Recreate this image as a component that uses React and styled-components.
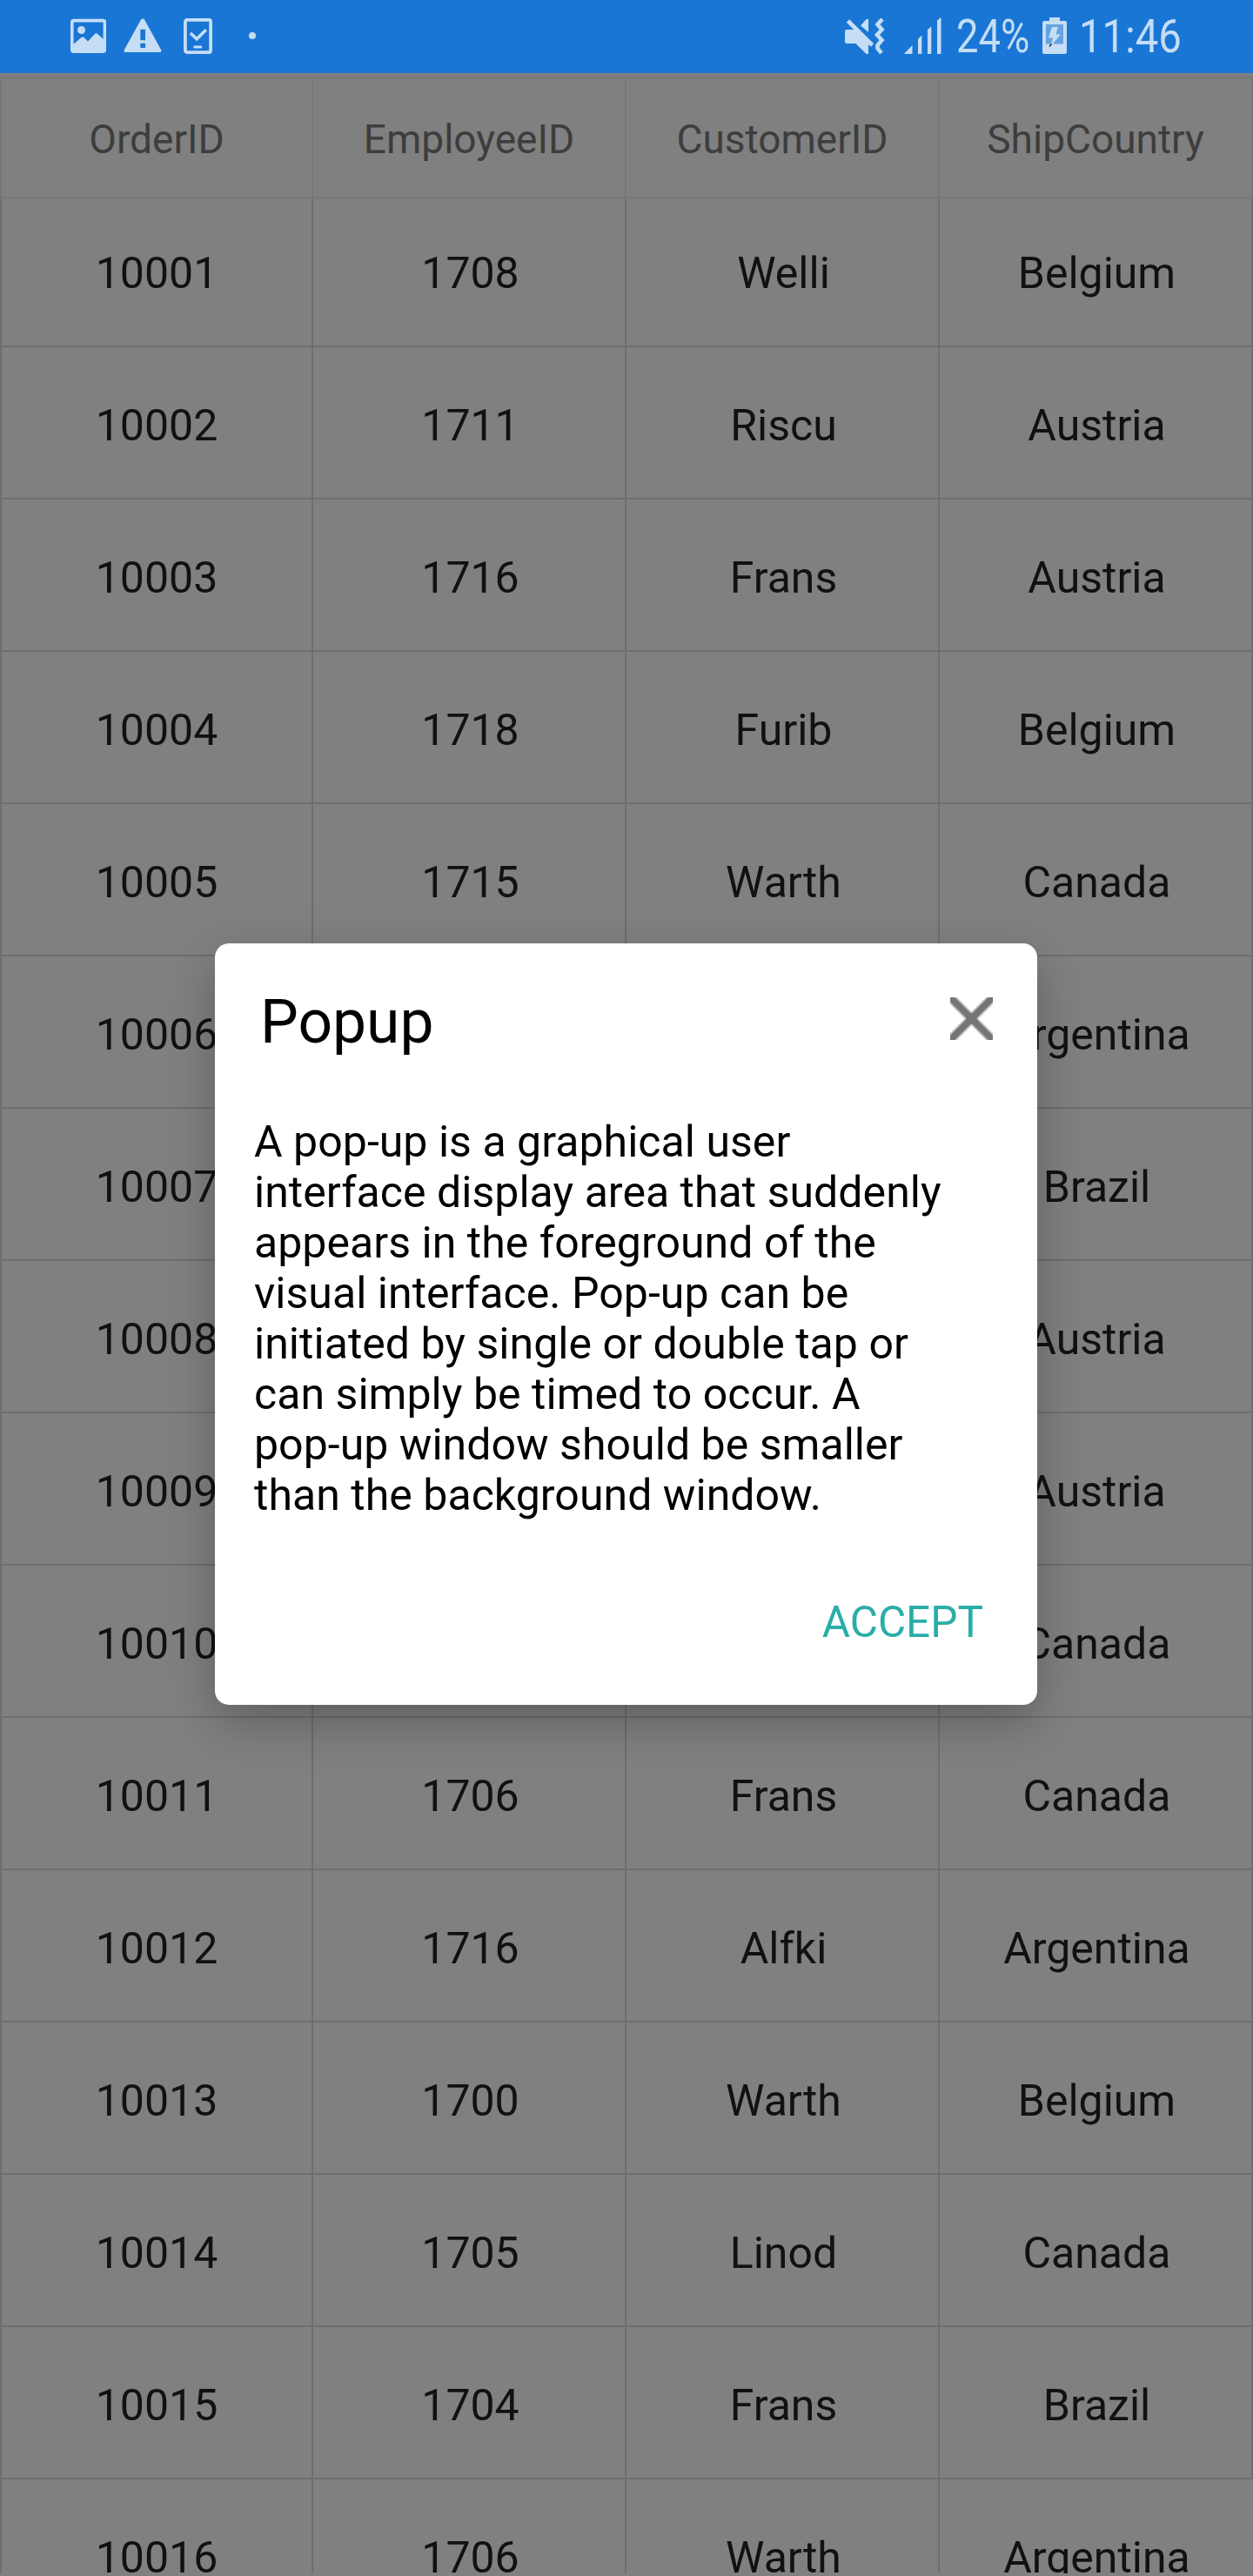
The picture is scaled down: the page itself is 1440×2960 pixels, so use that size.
import React from "react";
import styled, { createGlobalStyle } from "styled-components";

const Global = createGlobalStyle`
  body { margin: 0; background: #808080; font-family: Roboto, "Liberation Sans", sans-serif; }
  * { box-sizing: border-box; }
`;

const Screen = styled.div`
  position: relative;
  width: 1440px;
  height: 2960px;
  overflow: hidden;
  display: flex;
  flex-direction: column;
  background: #808080;
`;

const StatusBar = styled.header`
  display: flex;
  flex: none;
  justify-content: space-between;
  height: 84px;
  padding: 0 84px 0 81px;
  background: #1976d5;
  color: #c5ddf5;
`;

const StatusGroup = styled.div`
  display: flex;
  align-items: flex-start;
  padding-top: ${(p) => p.$top}px;
`;

const StatusIcon = styled.svg`
  flex: none;
  display: block;
  margin-left: ${(p) => p.$gap || 0}px;
`;

const StatusText = styled.div`
  flex: none;
  width: ${(p) => p.$width}px;
  margin-left: ${(p) => p.$gap}px;
  margin-top: 1px;
  height: 42px;
  line-height: 42px;
  font-size: 53.5px;
  white-space: nowrap;

  span {
    display: inline-block;
    transform-origin: 0 50%;
    transform: scaleX(${(p) => p.$stretch});
  }
`;

const Grid = styled.main`
  display: flex;
  flex-direction: column;
  flex: none;
  height: 2873px;
  overflow: hidden;
  padding-top: 4px;
`;

const Row = styled.div`
  display: grid;
  flex: none;
  grid-template-columns: 360px 360px 360px 360px;
  height: ${(p) => p.$height}px;
  border-bottom: 2px solid ${(p) => (p.$head ? "#777777" : "#6e6e6e")};
  border-top: ${(p) => (p.$head ? "2px solid #777777" : "0")};

  &:last-child > :last-child {
    border-right-color: transparent;
  }
`;

const Cell = styled.div`
  display: flex;
  align-items: center;
  justify-content: center;
  color: ${(p) => (p.$head ? "#3d3d3d" : "#111111")};
  font-size: ${(p) => (p.$head ? 46 : 50)}px;
  border-right: 2px solid ${(p) => (p.$head ? "#777777" : "#6e6e6e")};
  padding-top: ${(p) => p.$shift}px;
  padding-left: ${(p) => (p.$head ? 0 : 3)}px;

  &:first-child {
    border-left: 2px solid ${(p) => (p.$head ? "#777777" : "#6e6e6e")};
    padding-left: 0;
  }
`;

const Popup = styled.section`
  position: absolute;
  left: 247px;
  top: 1084px;
  width: 945px;
  height: 875px;
  display: flex;
  flex-direction: column;
  border-radius: 16px;
  background: #ffffff;
  color: #000000;
  box-shadow: 0 20px 56px rgba(0, 0, 0, 0.26);
`;

const PopupHeader = styled.div`
  display: flex;
  justify-content: space-between;
  align-items: flex-start;
  height: 199px;
  padding: 50px 51px 0 52px;
`;

const PopupTitle = styled.h1`
  margin: 0;
  font-size: 69.5px;
  line-height: 82px;
  font-weight: 400;
`;

const CloseButton = styled.button`
  padding: 0;
  border: 0;
  margin-top: 12px;
  background: none;

  svg {
    display: block;
  }
`;

const PopupBody = styled.p`
  margin: 0;
  padding-left: 45px;
  font-size: 50px;
  letter-spacing: 0.04px;
  line-height: 58px;
  white-space: nowrap;
`;

const PopupFooter = styled.div`
  display: flex;
  justify-content: flex-end;
  padding: 88px 62px 0 0;
`;

const AcceptButton = styled.button`
  padding: 0;
  border: 0;
  background: none;
  font: 400 49.5px/58px Roboto, "Liberation Sans", sans-serif;
  color: #29aea7;
`;

const columns = ["OrderID", "EmployeeID", "CustomerID", "ShipCountry"];

const orders = [
  ["10001", "1708", "Welli", "Belgium"],
  ["10002", "1711", "Riscu", "Austria"],
  ["10003", "1716", "Frans", "Austria"],
  ["10004", "1718", "Furib", "Belgium"],
  ["10005", "1715", "Warth", "Canada"],
  ["10006", "", "", "Argentina"],
  ["10007", "", "", "Brazil"],
  ["10008", "", "", "Austria"],
  ["10009", "", "", "Austria"],
  ["10010", "", "", "Canada"],
  ["10011", "1706", "Frans", "Canada"],
  ["10012", "1716", "Alfki", "Argentina"],
  ["10013", "1700", "Warth", "Belgium"],
  ["10014", "1705", "Linod", "Canada"],
  ["10015", "1704", "Frans", "Brazil"],
  ["10016", "1706", "Warth", "Argentina"],
];

const message = [
  "A pop-up is a graphical user",
  "interface display area that suddenly",
  "appears in the foreground of the",
  "visual interface. Pop-up can be",
  "initiated by single or double tap or",
  "can simply be timed to occur. A",
  "pop-up window should be smaller",
  "than the background window.",
];

export default function App() {
  return (
    <>
      <Global />
      <Screen>
        <StatusBar>
          <StatusGroup $top={21}>
            <StatusIcon width="41" height="41" viewBox="0 0 41 41">
              <rect x="1.8" y="2.6" width="37.6" height="35.6" rx="2" fill="none" stroke="currentColor" strokeWidth="3.6" />
              <circle cx="12.5" cy="13.5" r="4.5" fill="currentColor" />
              <path d="M2 31 L12.5 22 Q14 21 15.5 22 L20 26.5 L28 18 Q29.5 16.5 31 18 L39 25 V39 H2Z" fill="currentColor" />
            </StatusIcon>
            <StatusIcon $gap={20} width="44" height="41" viewBox="0 0 44 41">
              <path
                d="M20 1.6 Q22 -0.8 24 1.6 L43.3 36.4 Q44 39 41.4 39 H2.6 Q0 39 0.7 36.4Z M19.3 12.7 V25.3 H25 V12.7Z M19.3 28.7 V34 H25 V28.7Z"
                fill="currentColor"
                fillRule="evenodd"
              />
            </StatusIcon>
            <StatusIcon $gap={25} width="33" height="41" viewBox="0 0 33 41">
              <rect x="1.9" y="1.9" width="29.2" height="37.2" rx="2" fill="none" stroke="currentColor" strokeWidth="3.8" />
              <path d="M7.8 17 L15.2 23.8 L25.8 13.2" fill="none" stroke="currentColor" strokeWidth="3.6" />
              <path d="M12.8 33 H19.8" stroke="currentColor" strokeWidth="3.2" strokeLinecap="round" />
            </StatusIcon>
            <StatusIcon $gap={42} width="8" height="41" viewBox="0 0 8 41">
              <circle cx="4" cy="20" r="4" fill="currentColor" />
            </StatusIcon>
          </StatusGroup>
          <StatusGroup $top={20}>
            <StatusIcon width="46" height="44" viewBox="0 0 46 44">
              <path d="M2 14 H11.5 L27 29 V42 H24.5 L12.5 30 H2 Q0 30 0 28 V16 Q0 14 2 14Z" fill="currentColor" />
              <path d="M18 9.5 L24.5 2 H27 V17Z" fill="currentColor" />
              <path d="M3.5 4 L31.5 32" stroke="currentColor" strokeWidth="4.8" />
              <path d="M43 2 L37.5 8 L42.5 14 L37 20 L42.5 26 L37.5 32 V35.5 L42 41" fill="none" stroke="currentColor" strokeWidth="4.6" />
            </StatusIcon>
            <StatusIcon $gap={22} width="44" height="42" viewBox="0 0 44 42">
              <path d="M0 42 L9.5 32 V42Z M16 42 V25 L20.3 20.5 V42Z M27 42 V14 L31.3 10.5 V42Z M38 42 V3.5 L42.5 0 V42Z" fill="currentColor" />
            </StatusIcon>
            <StatusText $gap={16} $width={84} $stretch={0.85}>
              <span>24%</span>
            </StatusText>
            <StatusIcon $gap={15} width="28" height="42" viewBox="0 0 28 42">
              <path d="M8 0 H20 V4 H26 Q28 4 28 6 V40 Q28 42 26 42 H2 Q0 42 0 40 V6 Q0 4 2 4 H8Z" fill="currentColor" />
              <rect x="4" y="8" width="20" height="22.5" fill="#65a2e0" />
              <path d="M11 11 H18 L15.5 19.5 H21 L9 34 L12 23.5 H7Z" fill="currentColor" />
              <path d="M8 33.5 L10.5 30.5" stroke="#10253d" strokeWidth="1.3" />
            </StatusIcon>
            <StatusText $gap={14} $width={116} $stretch={0.885}>
              <span>11:46</span>
            </StatusText>
          </StatusGroup>
        </StatusBar>
        <Grid>
          <Row $head $height={140}>
            {columns.map((name) => (
              <Cell key={name} $head $shift={3}>{name}</Cell>
            ))}
          </Row>
          {orders.map((order, i) => (
            <Row key={order[0]} $height={i === 0 ? 171 : 175}>
              {order.map((value, c) => (
                <Cell key={c} $shift={i === 0 ? 2 : 6}>{value}</Cell>
              ))}
            </Row>
          ))}
        </Grid>
        <Popup>
          <PopupHeader>
            <PopupTitle>Popup</PopupTitle>
            <CloseButton aria-label="Close">
              <svg width="49" height="49" viewBox="0 0 49 49" fill="none" stroke="#757575">
                <path d="M0 0 L49 49 M49 0 L0 49" strokeWidth="11.5" opacity="0.3" />
                <path d="M0 0 L49 49 M49 0 L0 49" strokeWidth="9" opacity="0.5" />
                <path d="M0 0 L49 49 M49 0 L0 49" strokeWidth="7" />
                <circle cx="24.5" cy="24.5" r="6.5" fill="#757575" stroke="none" />
              </svg>
            </CloseButton>
          </PopupHeader>
          <PopupBody>
            {message.map((line) => (
              <React.Fragment key={line}>
                {line}
                <br />
              </React.Fragment>
            ))}
          </PopupBody>
          <PopupFooter>
            <AcceptButton>ACCEPT</AcceptButton>
          </PopupFooter>
        </Popup>
      </Screen>
    </>
  );
}
